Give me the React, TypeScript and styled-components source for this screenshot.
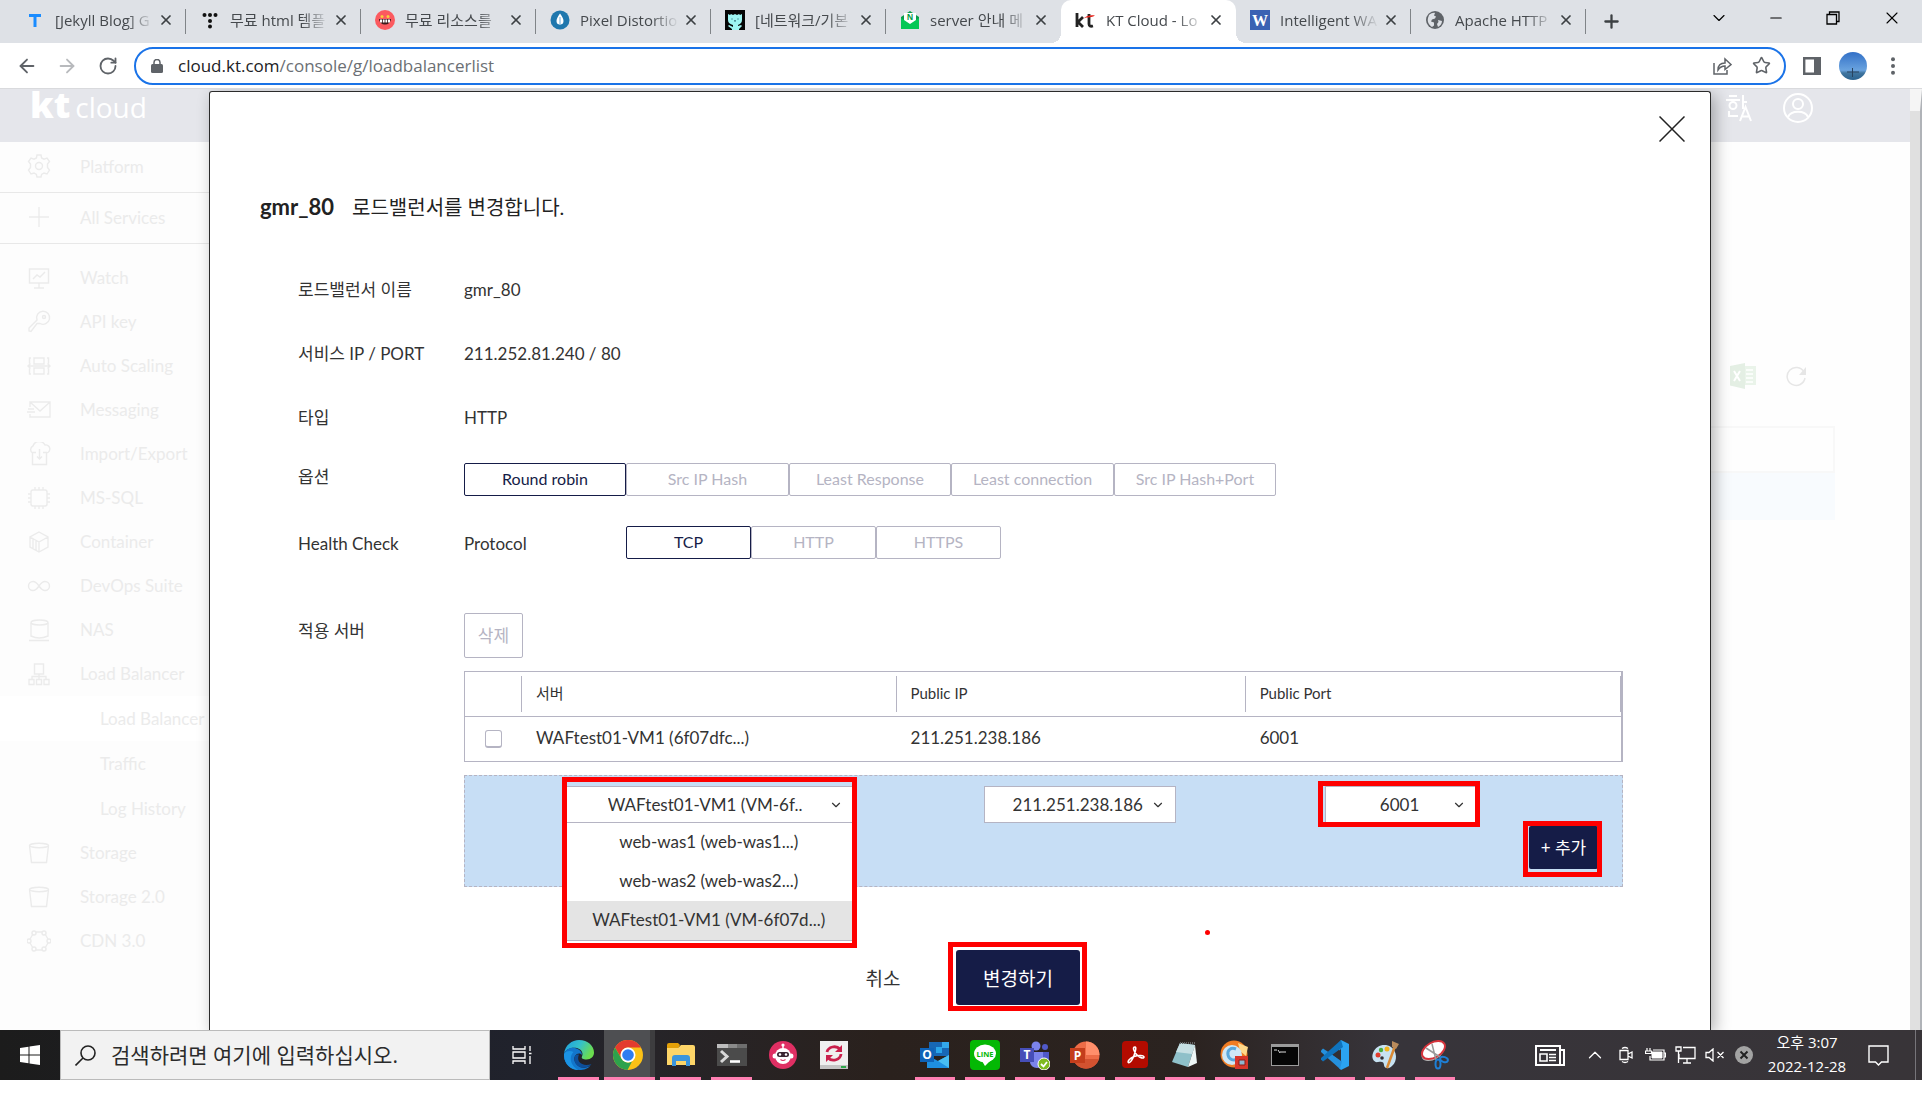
import React from "react";
import styled, { createGlobalStyle, css } from "styled-components";
import {
  ArrowLeft,
  ArrowRight,
  ChevronDown,
  ChevronUp,
  Minus,
  Plus,
  RotateCw,
  Star,
  X,
} from "lucide-react";

const uiFont = `"Open Sans", "Noto Sans CJK KR", sans-serif`;
const pageFont = `Lato, "Noto Sans CJK KR", sans-serif`;
const line = "#b5b4c3";
const navy = "#151c47";
const ink = "#333333";
const faint = "#ebebeb";
const pink = "#ff7fb2";

const GlobalStyle = createGlobalStyle`
  * { box-sizing: border-box; }
  body { margin: 0; background: #fff; overflow: hidden; }
  button, select, input { font: inherit; color: inherit; margin: 0; }
  button { background: none; border: 0; padding: 0; cursor: pointer; }
  ul { list-style: none; margin: 0; padding: 0; }
  svg { display: block; flex: none; }
`;

const Screen = styled.div`
  height: 100vh;
  padding-bottom: 30px;
  display: flex;
  flex-direction: column;
  font-family: ${uiFont};
  color: ${ink};
`;

/* ---------- browser chrome ---------- */

const TabStrip = styled.div`
  flex: none;
  height: 43px;
  background: #dee1e6;
  display: flex;
  padding-left: 11px;
`;

const Tabs = styled.div`
  display: flex;
`;

const Tab = styled.div<{ $active?: boolean; $line?: boolean }>`
  position: relative;
  width: 175px;
  padding: 0 12px 3px 14px;
  display: flex;
  align-items: center;
  color: #45494d;
  font-size: 15px;
  line-height: 24px;
  ${(p) =>
    p.$active &&
    css`
      background: #fff;
      border-radius: 10px 10px 0 0;
      &::before,
      &::after {
        content: "";
        position: absolute;
        bottom: 0;
        width: 10px;
        height: 10px;
      }
      &::before {
        left: -10px;
        background: radial-gradient(circle at 0 0, transparent 10px, #fff 10px);
      }
      &::after {
        right: -10px;
        background: radial-gradient(circle at 100% 0, transparent 10px, #fff 10px);
      }
    `}
  ${(p) =>
    p.$line &&
    css`
      &::after {
        content: "";
        position: absolute;
        right: 0;
        top: 9px;
        width: 1px;
        height: 25px;
        background: #808488;
      }
    `}
`;

const TabTitle = styled.span`
  flex: 1;
  min-width: 0;
  margin-left: 10px;
  margin-right: 4px;
  white-space: nowrap;
  mask-image: linear-gradient(90deg, #000 72%, transparent);
`;

const IconButton = styled.button<{ $w?: number }>`
  width: ${(p) => (p.$w ? `${p.$w}px` : "auto")};
  display: flex;
  align-items: center;
  justify-content: center;
  color: inherit;
`;

const NewTab = styled(IconButton)`
  width: 50px;
  color: #3c4043;
`;

const WindowControls = styled.div`
  margin-left: auto;
  display: flex;
  height: 36px;
  color: #000;
`;

const Toolbar = styled.div`
  flex: none;
  height: 46px;
  display: flex;
  align-items: center;
  padding: 0 11px 0 7px;
  background: #fff;
  border-bottom: 1px solid #d9dadd;
  color: #5f6368;
`;

const AddressBar = styled.div`
  flex: 1;
  height: 38px;
  margin: 0 6px;
  border: 2px solid #1a73e8;
  border-radius: 19px;
  display: flex;
  align-items: center;
  padding: 0 3px 0 15px;
`;

const Address = styled.a`
  flex: 1;
  margin-left: 15px;
  font-size: 17px;
  line-height: 24px;
  color: #6b6f74;
  text-decoration: none;
  b {
    font-weight: 400;
    color: #202124;
  }
`;

/* ---------- console page behind the dialog ---------- */

const Page = styled.div`
  position: relative;
  flex: 1;
  min-height: 0;
  display: flex;
  overflow: hidden;
  font-family: ${pageFont};
  background: #fefefe;
`;

const Console = styled.div`
  flex: 1;
  display: flex;
  flex-direction: column;
`;

const Masthead = styled.header`
  flex: none;
  height: 53px;
  background: #e5e6eb;
  color: #fff;
  display: flex;
  align-items: flex-start;
  justify-content: space-between;
  padding: 0 97px 0 30px;
`;

const Brand = styled.div`
  display: flex;
  align-items: baseline;
  gap: 5px;
  font-family: "Open Sans", sans-serif;
  font-size: 28px;
  line-height: 32px;
  b {
    font-size: 36px;
    font-weight: 800;
  }
`;

const MastIcons = styled.div`
  display: flex;
  align-items: center;
  gap: 30px;
  padding-top: 4px;
`;

const Body = styled.div`
  flex: 1;
  display: flex;
  min-height: 0;
`;

const Sidebar = styled.nav`
  width: 209px;
  flex: none;
  color: ${faint};
  font-size: 17px;
  background: #fdfdfd;
`;

const TopEntry = styled.a`
  height: 51px;
  display: flex;
  align-items: center;
  gap: 29px;
  padding: 0 0 2px 27px;
  border-bottom: 1px solid #e8e8e8;
`;

const Entries = styled.ul`
  padding-top: 12px;
`;

const Entry = styled.li`
  height: 44px;
  line-height: 24px;
  display: flex;
  align-items: center;
  gap: 29px;
  padding-left: 27px;
  white-space: nowrap;
`;

const SubEntry = styled.li`
  height: 45px;
  line-height: 24px;
  display: flex;
  align-items: center;
  padding-left: 100px;
  white-space: nowrap;
  &:first-child {
    background: #fff;
  }
`;

const Workspace = styled.main`
  flex: 1;
  display: flex;
  flex-direction: column;
  padding: 221px 75px 0 0;
`;

const Tools = styled.div`
  display: flex;
  justify-content: flex-end;
  align-items: center;
  gap: 29px;
  padding-right: 28px;
  color: #ececec;
`;

const BackTable = styled.div`
  margin-top: 37px;
  border: 2px solid #f8f8f8;
  height: 47px;
`;

const BackRow = styled.div`
  height: 47px;
  background: #f8fbfe;
`;

const Scrollbar = styled.div`
  width: 12px;
  background: #e0e0e0;
  border-top: 22px solid #f5f5f5;
  border-right: 2px solid #b0b3b8;
`;

/* ---------- dialog ---------- */

const Dialog = styled.section`
  position: absolute;
  top: 2px;
  bottom: 0;
  left: 209px;
  right: 211px;
  border: 1px solid #2b2b2b;
  border-bottom: 0;
  border-radius: 3px 3px 0 0;
  background: #fff;
  box-shadow: 4px 4px 16px rgba(0, 0, 0, 0.3);
  display: flex;
  flex-direction: column;
`;

const DialogTop = styled.div`
  display: flex;
  justify-content: flex-end;
  padding: 24px 25px 0 0;
`;

const DialogTitle = styled.h1`
  margin: 50px 0 56px 50px;
  display: flex;
  gap: 18px;
  font-size: 20px;
  line-height: 30px;
  font-weight: 400;
  color: #222;
  b {
    font-size: 22px;
  }
`;

const Form = styled.div`
  padding: 0 87px 0 88px;
  font-size: 17px;
  line-height: 24px;
`;

const FormRow = styled.div<{ $gap: number }>`
  display: flex;
  align-items: flex-start;
  margin-bottom: ${(p) => p.$gap}px;
`;

const Label = styled.div<{ $drop?: number }>`
  width: 166px;
  flex: none;
  padding-top: ${(p) => p.$drop ?? 0}px;
`;

const Protocol = styled(Label)`
  width: 162px;
`;

const Field = styled.div`
  flex: 1;
`;

const Segments = styled.div`
  display: flex;
`;

const Segment = styled.button<{ $w: number; $on?: boolean }>`
  width: ${(p) => p.$w}px;
  height: 33px;
  padding-bottom: 2px;
  border: 1px solid ${(p) => (p.$on ? navy : line)};
  border-radius: 2px;
  font-size: 16px;
  line-height: 20px;
  color: ${(p) => (p.$on ? navy : line)};
  background: #fff;
`;

const DeleteButton = styled.button`
  display: block;
  width: 59px;
  height: 45px;
  border: 1px solid ${line};
  border-radius: 2px;
  color: ${line};
`;

const ServerTable = styled.table`
  width: 100%;
  margin: 13px 0;
  border: 1px solid ${line};
  border-right-width: 2px;
  border-spacing: 0;
  table-layout: fixed;
  th,
  td {
    height: 44px;
    padding: 0 0 2px 14px;
    text-align: left;
    font-weight: 400;
  }
  th {
    font-size: 15px;
    line-height: 34px;
    padding: 4px 0;
    height: 45px;
    border-bottom: 1px solid ${line};
  }
  td:first-child {
    padding: 0 0 0 20px;
  }
`;

const PickCol = styled.col`
  width: 57px;
`;

const ServerCol = styled.col`
  width: 32.4%;
`;

const IpCol = styled.col`
  width: 30.2%;
`;

const HeadCell = styled.div`
  height: 36px;
  border-right: 1px solid ${line};
  padding-left: 14px;
`;

const Check = styled.input`
  appearance: none;
  display: block;
  width: 17px;
  height: 18px;
  border: 1px solid ${line};
  border-bottom-width: 2px;
  border-radius: 3px;
  background: #fff;
`;

const AddPanel = styled.div`
  border: 1px dashed ${line};
  background: #c7def5;
  padding: 10px 0 17px;
`;

const Picks = styled.div`
  display: grid;
  grid-template-columns: 487fr 254fr 388fr 27fr;
  justify-items: center;
`;

const Pick = styled.div<{ $w: number }>`
  position: relative;
  width: ${(p) => p.$w}px;
`;

const Select = styled.select<{ $pad: string }>`
  appearance: none;
  display: block;
  width: 100%;
  height: 37px;
  border: 1px solid ${line};
  border-radius: 0;
  background: #fff;
  padding: ${(p) => p.$pad};
  text-align: left;
`;

const Arrow = styled.span`
  position: absolute;
  right: 11px;
  top: 12px;
  pointer-events: none;
`;

const Options = styled.ul`
  position: absolute;
  z-index: 1;
  top: 37px;
  left: 0;
  right: 0;
  background: #fff;
  border: 1px solid ${line};
  border-top: 0;
`;

const Option = styled.li<{ $on?: boolean }>`
  height: 39px;
  line-height: 38px;
  text-align: center;
  background: ${(p) => (p.$on ? "#e4e4e4" : "#fff")};
`;

const Mark = styled.span<{ $inset: string }>`
  position: absolute;
  z-index: 2;
  inset: ${(p) => p.$inset};
  border: 5px solid #fe0000;
  pointer-events: none;
`;

const Dot = styled.span`
  position: absolute;
  left: 66.3%;
  bottom: 95px;
  width: 5px;
  height: 5px;
  border-radius: 50%;
  background: #fe0000;
`;

const AddLine = styled.div`
  display: flex;
  justify-content: flex-end;
  padding: 3px 24px 0 0;
`;

const Marked = styled.div`
  position: relative;
`;

const AddButton = styled.button`
  display: block;
  width: 69px;
  height: 43px;
  border-radius: 2px;
  background: ${navy};
  color: #fff;
  font-size: 17px;
`;

const Footer = styled.div`
  display: flex;
  justify-content: center;
  gap: 28px;
  padding: 63px 2px 0 0;
  font-size: 19px;
`;

const CancelButton = styled.button`
  width: 90px;
  height: 55px;
`;

const ApplyButton = styled.button`
  display: block;
  width: 124px;
  height: 55px;
  border-radius: 3px;
  background: ${navy};
  color: #fff;
`;

/* ---------- taskbar ---------- */

const Taskbar = styled.footer`
  flex: none;
  height: 50px;
  display: flex;
  color: #fff;
  background: linear-gradient(90deg, #1c1c1c 0, #20222c 27%, #262428 34%, #2a211d 46%, #2b2320 62%, #37343a 72%, #383438 100%);
`;

const StartButton = styled(IconButton)`
  width: 60px;
`;

const SearchBox = styled.label`
  width: 430px;
  background: #f2f2f2;
  border: 1px solid #bbb;
  display: flex;
  align-items: center;
  padding-left: 14px;
  color: #1a1a1a;
  input {
    flex: 1;
    min-width: 0;
    margin-left: 15px;
    border: 0;
    padding: 0;
    background: none;
    font-size: 21px;
    line-height: 30px;
    color: #222;
  }
  input::placeholder {
    color: #2b2b2b;
    opacity: 1;
  }
`;

const TaskGroup = styled.div<{ $gap?: number }>`
  display: flex;
  margin-left: ${(p) => p.$gap ?? 0}px;
`;

const TaskButton = styled.button<{ $w: number; $open?: boolean; $active?: boolean }>`
  position: relative;
  width: ${(p) => p.$w}px;
  height: 50px;
  display: flex;
  align-items: center;
  justify-content: center;
  background: ${(p) => (p.$active ? "linear-gradient(90deg, #4e4f52 46px, #3d3d3f 46px)" : "transparent")};
  padding-right: ${(p) => (p.$active ? 4 : 0)}px;
  &::after {
    content: "";
    display: ${(p) => (p.$open ? "block" : "none")};
    position: absolute;
    bottom: 0;
    left: ${(p) => (p.$active ? 0 : 5)}px;
    right: ${(p) => (p.$active ? 0 : 5)}px;
    height: 3px;
    background: ${pink};
  }
`;

const Tray = styled.div`
  margin-left: auto;
  display: flex;
  align-items: center;
`;

const Clock = styled.div`
  width: 88px;
  margin: 0 2px 2px 4px;
  text-align: center;
  font-size: 15px;
  line-height: 24px;
`;

const TrayEnd = styled.div`
  width: 7px;
  height: 50px;
  margin-left: 11px;
  border-left: 1px solid #77757a;
`;

/* ---------- drawings ---------- */

type Kids = { children: React.ReactNode };
const Svg = ({ w = 20, h = w, box = "0 0 20 20", children }: Kids & { w?: number; h?: number; box?: string }) => (
  <svg width={w} height={h} viewBox={box} fill="none" aria-hidden="true">
    {children}
  </svg>
);

const favicons = {
  t: (
    <Svg>
      <path d="M4 4h12v3h-4.500v10h-3V7H4z" fill="#1a8cff" />
    </Svg>
  ),
  dots: (
    <Svg>
      <g fill="#111">
        <circle cx="4.500" cy="5" r="2" />
        <circle cx="10" cy="5" r="2" />
        <circle cx="15.500" cy="5" r="2" />
        <circle cx="10" cy="11" r="2" />
        <circle cx="10" cy="16.500" r="2" />
      </g>
    </Svg>
  ),
  grin: (
    <Svg>
      <circle cx="10" cy="10" r="10" fill="#fb5a5f" />
      <path d="M4 9h12a6 5.500 0 0 1-12 0z" fill="#3b1a1a" />
      <path d="M5 9.500h10v3H5z" fill="#fff" />
      <path d="M7.500 9v4M10 9v4M12.500 9v4" stroke="#3b1a1a" strokeWidth=".8" />
      <circle cx="7" cy="6.500" r="1.500" fill="#f8d23c" />
      <circle cx="13" cy="6.500" r="1.500" fill="#f8d23c" />
    </Svg>
  ),
  drop: (
    <Svg>
      <circle cx="10" cy="10" r="9.500" fill="#1f77ad" />
      <path d="M10 3.500c2 3 3.500 5 3.500 7.500a3.500 3.500 0 0 1-7 0C6.500 8.500 8 6.500 10 3.500z" fill="#fff" />
      <path d="M10 7v7.500" stroke="#9cc9e6" strokeWidth="1.500" />
    </Svg>
  ),
  cat: (
    <Svg>
      <path d="M0 0h20v20H0z" fill="#050505" />
      <path d="M3 4l2 1 1-1 2 1 2-1 2 1 2-1 1 1 2-1v6c0 3-2 4-4 5v1l3-1 1 1-3 3v1H7v-1l-4-3 1-1 4 2v-2c-3-1-5-2-5-5z" fill="#9df5f2" />
      <path d="M6.500 9h1M12.500 9h1M9 10.500l1 .8 1-.8" stroke="#145" strokeWidth=".9" />
    </Svg>
  ),
  mail: (
    <Svg>
      <path d="M1 7l9-6 9 6v11H1z" fill="#0a9d4a" />
      <path d="M4 3h12v9l-6 3-6-3z" fill="#fff" />
      <path d="M1 8l9 6 9-6v11H1z" fill="#05c755" />
      <text x="10" y="10" fontSize="8" fontWeight="700" textAnchor="middle" fill="#0a9d4a" fontFamily="Open Sans">
        N
      </text>
    </Svg>
  ),
  kt: (
    <Svg w={21} h={20} box="0 0 21 20">
      <path d="M2 3v14M8 7l-5 5 5 5M14 4v10q0 3 4 2" stroke="#222" strokeWidth="2.800" />
      <path d="M8 9c3-3 7 0 12-3.500-3-.5-8-1-12 3.500z" fill="#e5231b" />
    </Svg>
  ),
  w: (
    <Svg>
      <path d="M0 0h20v20H0z" fill="#3a62b3" />
      <text x="10" y="15.500" fontSize="16" fontWeight="700" textAnchor="middle" fill="#fff" fontFamily="Liberation Serif">
        W
      </text>
    </Svg>
  ),
  globe: (
    <Svg>
      <circle cx="10" cy="10" r="9" fill="#5f6368" />
      <path d="M4 5c2-2 5-2.500 6-2l-1 2.500 2 1-1 2-3 1-1 2 3 1v3l-2 1.500C4 15 2 12 3 8zM13 10l4 1c0 3-2 5-4 6l-1-3 1.500-2z" fill="#dee1e6" />
    </Svg>
  ),
};

const tabs: { icon: keyof typeof favicons; title: string }[] = [
  { icon: "t", title: "[Jekyll Blog] G" },
  { icon: "dots", title: "무료 html 템플" },
  { icon: "grin", title: "무료 리소스를" },
  { icon: "drop", title: "Pixel Distortio" },
  { icon: "cat", title: "[네트워크/기본" },
  { icon: "mail", title: "server 안내 메" },
  { icon: "kt", title: "KT Cloud - Lo" },
  { icon: "w", title: "Intelligent WA" },
  { icon: "globe", title: "Apache HTTP" },
];

const LineIcon = ({ children }: Kids) => (
  <svg width="24" height="24" viewBox="0 0 24 24" fill="none" stroke="currentColor" strokeWidth="1.400" aria-hidden="true">
    {children}
  </svg>
);

const bucket = (
  <LineIcon>
    <path d="M2.500 4.500l2 17h15l2-17" />
    <ellipse cx="12" cy="4.500" rx="9.500" ry="2.200" />
  </LineIcon>
);

const services: { name: string; icon: React.ReactNode }[] = [
  { name: "Watch", icon: <LineIcon><path d="M2.500 3h19v14h-19zM12 17v5M7 22h10M6 13l4-4 3 2 5-5" /></LineIcon> },
  {
    name: "API key",
    icon: <LineIcon><path d="M10 13.500L4 21.500l-2-.5v-3l8-8a6.500 6.500 0 1 1 3 3.500z" /><circle cx="17" cy="7" r="1.500" /></LineIcon>,
  },
  {
    name: "Auto Scaling",
    icon: <LineIcon><path d="M7 4h10v6H7zM7 14h10v6H7zM4 4H2.500v5.500M20 4h1.500v5.500M4 20H2.500v-5.500M20 20h1.500v-5.500M1 12h22M3.500 9.500L1 12l2.500 2.500M20.500 9.500L23 12l-2.500 2.500" /></LineIcon>,
  },
  { name: "Messaging", icon: <LineIcon><path d="M3 9V4h20v15H3v-3M3 4l10 9L23 4M1 11h6M0 14h8" /></LineIcon> },
  {
    name: "Import/Export",
    icon: <LineIcon><path d="M5.500 11a4 4 0 0 1 .5-7 6.500 6.500 0 0 1 12-1 4 4 0 0 1 1.500 8M9 10.500H5.500v12h14v-12H16M12.500 17V7M10 14.500l2.500 2.500 2.500-2.500" /></LineIcon>,
  },
  {
    name: "MS-SQL",
    icon: <LineIcon><rect x="4" y="4" width="16" height="16" rx="2" /><path d="M8 4V1M12 4V1M16 4V1M8 23v-3M12 23v-3M16 23v-3M1 8h3M1 12h3M1 16h3M20 8h3M20 12h3M20 16h3" /></LineIcon>,
  },
  { name: "Container", icon: <LineIcon><path d="M12 2l9 5v10l-9 5-9-5V7zM3 7l9 5 9-5M12 12v10M6 9v9M9 11v9" /></LineIcon> },
  { name: "DevOps Suite", icon: <LineIcon><path d="M12 12c-2-3-3.500-4.500-6-4.500a4.500 4.500 0 0 0 0 9c2.500 0 4-1.500 6-4.500s3.500-4.500 6-4.500a4.500 4.500 0 0 1 0 9c-2.500 0-4-1.500-6-4.500z" /></LineIcon> },
  { name: "NAS", icon: <LineIcon><path d="M4 5v13q8 4 17 0V5M2 22.500h20" /><ellipse cx="12.500" cy="4.500" rx="8.500" ry="2.500" /></LineIcon> },
  { name: "Load Balancer", icon: <LineIcon><path d="M7.500 2h9v10h-9zM12 12v5M5 17v-2.500h14V17M2 17.500h5v5H2zM9.500 17.500h5v5h-5zM17 17.500h5v5h-5z" /></LineIcon> },
];

const lastServices: { name: string; icon: React.ReactNode }[] = [
  { name: "Storage", icon: bucket },
  { name: "Storage 2.0", icon: bucket },
  {
    name: "CDN 3.0",
    icon: (
      <LineIcon>
        <path d="M9 3h6M18 5l3 5M21 14l-3 5M15 21H9M6 19l-3-5M3 10l3-5" />
        <circle cx="7" cy="4" r="2" /><circle cx="17" cy="4" r="2" /><circle cx="22" cy="12" r="2" />
        <circle cx="17" cy="20" r="2" /><circle cx="7" cy="20" r="2" /><circle cx="2" cy="12" r="2" />
      </LineIcon>
    ),
  },
];

const T = ({ x, y, s, children, f = "#fff" }: { x: number; y: number; s: number; f?: string; children: string }) => (
  <text x={x} y={y} fontSize={s} fill={f} fontWeight="700" textAnchor="middle" fontFamily="Open Sans">
    {children}
  </text>
);

const Big = ({ children }: Kids) => (
  <Svg w={30} box="0 0 30 30">
    {children}
  </Svg>
);

const mainTasks = [
  {
    name: "Edge", open: true,
    art: (
      <Big>
        <defs>
          <linearGradient id="edgeTop" x1="0" x2="1" y1="0" y2=".4">
            <stop offset="0" stopColor="#1b9de2" /><stop offset=".55" stopColor="#35c1c9" /><stop offset="1" stopColor="#6bdc4f" />
          </linearGradient>
        </defs>
        <path d="M0 14C1 5 8 0 15 0c9 0 15 6 15 12.500 0 4-3 7-7.500 7-3.500 0-5.500-1-4.500-3 1.500-3 0-7-5-8.500C7 7 2 9 0 14z" fill="url(#edgeTop)" />
        <path d="M0 14c1.500-4.500 6-7 11-6 4 .8 7 3.500 7 7-1-2-5-2.500-7 1-2 4 1 9 5 11 4 1.500 8 .5 11-2-3 4-7 5-11.500 5C6 30-.5 23 0 14z" fill="#1276cc" />
        <path d="M9.500 12c-5 5-3 14 5 18C6 30-.5 23 0 14c3-4 7-3 9.500-2z" fill="#1b93e4" />
        <path d="M11 16c-2 5 1 10 6 11.500 4 1 8-.5 10.500-3.500-5 2-10 1-12.500-2.500-1.300-2-1-5 0-7-2-.3-3.400.2-4 1.500z" fill="#0d4f9c" />
      </Big>
    ),
  },
  {
    name: "Chrome", open: true, active: true,
    art: (
      <Big>
        <circle cx="15" cy="15" r="15" fill="#fbc116" />
        <path d="M2 7.500A15 15 0 0 1 28 7.500H15a7.500 7.500 0 0 0-6.500 11z" fill="#e33b2e" />
        <path d="M2 7.500l6.500 11.250A7.500 7.500 0 0 0 19 21.500L14.500 30A15 15 0 0 1 2 7.500z" fill="#2da24c" />
        <circle cx="15" cy="15" r="7.500" fill="#fff" />
        <circle cx="15" cy="15" r="5.800" fill="#2f7df0" />
      </Big>
    ),
  },
  {
    name: "탐색기", open: true,
    art: (
      <Big>
        <path d="M1 5q0-2 2-2h9l2 2-2 4H1z" fill="#e3a008" />
        <path d="M1 8h11l3-3h12q2 0 2 2v18H1z" fill="#fdd568" />
        <path d="M6 26v-8q0-3 3-3h12q3 0 3 3v8h-4v-5h-10v5z" fill="#3b95dc" />
      </Big>
    ),
  },
  {
    name: "Terminal", open: true,
    art: (
      <Big>
        <path d="M0 4h30v22H0z" fill="#4b4b4b" />
        <path d="M0 4h11v4H0z" fill="#bdbdbd" /><path d="M11 4h9v4h-9z" fill="#8a8a8a" /><path d="M20 4h10v4H20z" fill="#6e6e6e" />
        <path d="M4 11l6 5.500-6 5.500" stroke="#d8d8d8" strokeWidth="3" /><path d="M13 21.500h10" stroke="#fff" strokeWidth="2.600" />
      </Big>
    ),
  },
  {
    name: "Bot",
    art: (
      <Big>
        <circle cx="15" cy="15" r="14" fill="#df2f63" />
        <path d="M15 5v6" stroke="#fff" strokeWidth="1.500" />
        <circle cx="15" cy="5" r="1.600" fill="#fff" />
        <circle cx="15" cy="16" r="8" fill="#fff" /><ellipse cx="6.500" cy="16" rx="2" ry="2.500" fill="#fff" /><ellipse cx="23.500" cy="16" rx="2" ry="2.500" fill="#fff" />
        <rect x="9" y="12" width="12" height="5" rx="2.500" fill="#3a2632" />
        <circle cx="12" cy="14.500" r="1.200" fill="#fff" /><circle cx="18" cy="14.500" r="1.200" fill="#fff" />
        <path d="M12.500 19.500q2.500 2 5 0" stroke="#df2f63" strokeWidth="1.200" />
      </Big>
    ),
  },
  {
    name: "Sync",
    art: (
      <Big>
        <path d="M1 1h28v28H1z" fill="#efefef" />
        <path d="M1 25h28v4H1z" fill="#c4c4c4" />
        <path d="M22 26h5v2h-5z" fill="#2ea84a" />
        <path d="M8 12a7.500 6.500 0 0 1 13-3M22 14a7.500 6.500 0 0 1-13 4" stroke="#c9204c" strokeWidth="2.800" />
        <path d="M23 5v7h-7zM7 22v-7h7z" fill="#c9204c" />
      </Big>
    ),
  },
];

const appTasks = [
  {
    name: "Outlook",
    art: (
      <Big>
        <path d="M9 2h20v14H9z" fill="#1767b5" /><path d="M16 7h6v6h-6z" fill="#2aa5ea" /><path d="M22 2h7v6h-7z" fill="#33a8ec" />
        <path d="M7 15l11 6 11-6v13H7z" fill="#1e8fe0" /><path d="M29 15L18 21l11 7z" fill="#48bdf2" />
        <path d="M0 8h14v14H0z" fill="#0e63b8" /><T x={7} y={19} s={12}>O</T>
      </Big>
    ),
  },
  {
    name: "LINE",
    art: (
      <Big>
        <rect width="30" height="30" rx="4" fill="#04b804" />
        <ellipse cx="15" cy="13.500" rx="11" ry="9" fill="#fff" /><path d="M12 21l3 5 6-6z" fill="#fff" />
        <T x={15} y={16.500} s={7.500} f="#04b804">LINE</T>
      </Big>
    ),
  },
  {
    name: "Teams",
    art: (
      <Big>
        <circle cx="16" cy="6" r="4.500" fill="#7b83eb" /><circle cx="25" cy="7" r="3" fill="#5059c9" />
        <path d="M10 12h14v10a7 6 0 0 1-14 0z" fill="#7b83eb" /><path d="M23 12h6v9h-6z" fill="#5059c9" />
        <path d="M0 8h14v14H0z" fill="#464eb8" /><T x={7} y={19} s={12}>T</T>
        <circle cx="24" cy="24" r="6" fill="#7fba20" stroke="#fff" /><path d="M21 24l2.500 2.500L27 22" stroke="#fff" strokeWidth="1.800" />
      </Big>
    ),
  },
  {
    name: "PowerPoint",
    art: (
      <Big>
        <circle cx="16" cy="15" r="13.500" fill="#ed6c47" /><path d="M16 1.500A13.500 13.500 0 0 1 29.500 15H16z" fill="#ff8f6b" />
        <path d="M3 19a13.500 13.500 0 0 0 26 0z" fill="#d35230" /><path d="M0 8h15v15H0z" fill="#c43e1c" /><T x={7.500} y={20} s={12}>P</T>
      </Big>
    ),
  },
  {
    name: "Acrobat",
    art: (
      <Big>
        <rect x="2" y="1" width="26" height="27" rx="4" fill="#b30b00" />
        <path d="M15 7c-3 0-1 5 2 8 3 3 7 4 7 2s-6-2-10-.500-7 5-5.500 6 4-3 5.500-7 2.500-8.500 1-8.500z" stroke="#fff" strokeWidth="1.600" />
      </Big>
    ),
  },
  {
    name: "Notepad",
    art: (
      <Big>
        <path d="M10 3l15 2-7 22-16-5z" fill="#8fc0c9" /><path d="M10 3l15 2-3 9-16-2z" fill="#c6dfe3" />
        <path d="M25 5l2 18-9 4z" fill="#eef6f6" /><path d="M10 3h16" stroke="#666" strokeDasharray="1 1" strokeWidth="2" />
      </Big>
    ),
  },
  {
    name: "Capture",
    art: (
      <Big>
        <circle cx="14" cy="14" r="13.500" fill="#f07c23" /><path d="M18 3l10 4-2 9-6-5z" fill="#ffd98a" />
        <circle cx="12" cy="15" r="10" fill="#cfe7f6" /><path d="M16 9c-5-2-9 1-8 6s6 6 9 4" stroke="#5aa7dc" strokeWidth="3" />
        <path d="M15 16h13v13H15z" fill="#d8352a" /><path d="M19 20h6v5h-6z" fill="#8fb6cf" stroke="#8d1d16" />
      </Big>
    ),
  },
  {
    name: "Command Prompt",
    art: (
      <Big>
        <path d="M1 4h28v22H1z" fill="#9b9b9b" /><path d="M2 7h26v18H2z" fill="#060606" /><path d="M4 10h3M8 10l2 3M10 12h6" stroke="#ddd" />
      </Big>
    ),
  },
  {
    name: "VS Code",
    art: (
      <Big>
        <path d="M21 0l8 4v22l-8 4-2-2V3z" fill="#2ba3f1" />
        <path d="M3 8.500L1 10.500v1.500l19 17 2-8z" fill="#2590dd" />
        <path d="M21 0L1 18v1.500l2 2L23 7z" fill="#0f73bd" />
        <path d="M21 9v12l-8-6z" fill="#322f33" />
      </Big>
    ),
  },
  {
    name: "Paint",
    art: (
      <Big>
        <path d="M3 13C6 5 15 3 21 7s7 14 1 19c-4 4-8 2-8-1s-2-4-6-3-7-4-5-9z" fill="#c7e2f2" />
        <circle cx="8" cy="15" r="2.500" fill="#e03c2c" /><circle cx="11" cy="10" r="2.200" fill="#49ad3f" /><circle cx="17" cy="9" r="2.500" fill="#f4b31c" /><circle cx="12" cy="18" r="1.800" fill="#322f33" />
        <path d="M25 6L17 28" stroke="#d98a35" strokeWidth="2.500" /><path d="M22 1l7 3-3 5-4-2z" fill="#b98b5c" />
      </Big>
    ),
  },
  {
    name: "Snipping Tool",
    art: (
      <Big>
        <ellipse cx="13" cy="12" rx="12.500" ry="7.500" transform="rotate(-30 13 12)" fill="#b5b5b5" />
        <ellipse cx="13.500" cy="10" rx="12.500" ry="7.500" transform="rotate(-30 13.500 10)" fill="#fff" stroke="#d6343c" strokeWidth="2" />
        <path d="M6 8l14 9M12 4l4 16" stroke="#999" strokeWidth="1.500" />
        <ellipse cx="18" cy="24" rx="2.500" ry="4.500" stroke="#1e7fd6" strokeWidth="2" /><ellipse cx="24" cy="19.500" rx="4" ry="2.500" transform="rotate(20 24 19.500)" stroke="#1e7fd6" strokeWidth="2" />
      </Big>
    ),
  },
];

const balancing = ["Round robin", "Src IP Hash", "Least Response", "Least connection", "Src IP Hash+Port"];
const protocols = ["TCP", "HTTP", "HTTPS"];

/* ---------- sections ---------- */

const BrowserBar = () => (
  <>
    <TabStrip>
      <Tabs>
        {tabs.map((tab, i) => (
          <Tab key={tab.title} $active={i === 6} $line={i !== 6 && i !== 5}>
            {favicons[tab.icon]}
            <TabTitle>{tab.title}</TabTitle>
            <IconButton aria-label="탭 닫기">
              <X size={16} strokeWidth={2.6} color="#3c4043" />
            </IconButton>
          </Tab>
        ))}
      </Tabs>
      <NewTab aria-label="새 탭">
        <Plus size={21} strokeWidth={2.6} />
      </NewTab>
      <WindowControls>
        <IconButton $w={57} aria-label="탭 검색"><ChevronDown size={20} strokeWidth={1.4} /></IconButton>
        <IconButton $w={57} aria-label="최소화"><Minus size={18} strokeWidth={1.4} /></IconButton>
        <IconButton $w={57} aria-label="복원">
          <Svg w={14} box="0 0 14 14"><path d="M1 3.500h9.500V13H1zM3.500 3.500V1H13v9.500h-2.500" stroke="#000" strokeWidth="1.300" /></Svg>
        </IconButton>
        <IconButton $w={61} aria-label="닫기"><X size={20} strokeWidth={1.3} /></IconButton>
      </WindowControls>
    </TabStrip>
    <Toolbar>
      <IconButton $w={40} aria-label="뒤로"><ArrowLeft size={22} /></IconButton>
      <IconButton $w={40} aria-label="앞으로"><ArrowRight size={22} color="#b8babd" /></IconButton>
      <IconButton $w={41} aria-label="새로고침"><RotateCw size={20} strokeWidth={2.2} /></IconButton>
      <AddressBar>
        <Svg w={12} h={14} box="0 0 12 14">
          <rect x="0" y="5" width="12" height="9" rx="1.500" fill="#5f6368" />
          <path d="M3 6V3.500a3 3 0 0 1 6 0V6" stroke="#5f6368" strokeWidth="1.500" />
        </Svg>
        <Address href="#"><b>cloud.kt.com</b>/console/g/loadbalancerlist</Address>
        <IconButton $w={40} aria-label="공유">
          <Svg w={20}><path d="M2 7v11h13v-4M6 14c0-5 3-7 7-7V3l6 5.500-6 5V10c-3 0-5 1-7 4z" stroke="#5f6368" strokeWidth="1.500" /></Svg>
        </IconButton>
        <IconButton $w={39} aria-label="북마크"><Star size={19} /></IconButton>
      </AddressBar>
      <IconButton $w={40} aria-label="사이드 패널">
        <Svg w={18} box="0 0 18 18"><path d="M1.200 1.200h15.600v15.600H1.200z" stroke="#5f6368" strokeWidth="2.400" /><path d="M11 1h6v16h-6z" fill="#5f6368" /></Svg>
      </IconButton>
      <IconButton $w={42} aria-label="프로필">
        <Svg w={28} box="0 0 28 28">
          <defs><linearGradient id="sky" x2="0" y2="1"><stop stopColor="#3270c7" /><stop offset=".65" stopColor="#6aa3df" /><stop offset=".75" stopColor="#40759f" /><stop offset="1" stopColor="#2b628f" /></linearGradient></defs>
          <circle cx="14" cy="14" r="14" fill="url(#sky)" /><path d="M13.500 16v9M8 20h12" stroke="#28435e" />
        </Svg>
      </IconButton>
      <IconButton $w={37} aria-label="메뉴">
        <Svg w={4} h={18} box="0 0 4 18"><g fill="#5f6368"><circle cx="2" cy="2.200" r="2" /><circle cx="2" cy="9" r="2" /><circle cx="2" cy="15.800" r="2" /></g></Svg>
      </IconButton>
    </Toolbar>
  </>
);

const ConsolePage = () => (
  <>
    <Console>
      <Masthead>
        <Brand><b>kt</b>cloud</Brand>
        <MastIcons>
          <Svg w={28} h={28} box="0 0 28 28">
            <path d="M4 2h8M1 6h14M18 1v14M18 8h4M4 17v5h9" stroke="#fff" strokeWidth="2" />
            <circle cx="8" cy="11.500" r="3.500" stroke="#fff" strokeWidth="2" />
            <path d="M15 27l5.500-14L26 27M17 22.500h7" stroke="#fff" strokeWidth="2" />
          </Svg>
          <Svg w={30} box="0 0 30 30">
            <circle cx="15" cy="15" r="14" stroke="#fff" strokeWidth="2" />
            <circle cx="15" cy="11" r="5" stroke="#fff" strokeWidth="2" />
            <path d="M5 24c3-7 17-7 20 0" stroke="#fff" strokeWidth="2" />
          </Svg>
        </MastIcons>
      </Masthead>
      <Body>
        <Sidebar>
          <TopEntry>
            <LineIcon><circle cx="12" cy="12" r="3.500" /><path d="M10 1h4l.6 3 2.400 1.200L20 4l2.500 3.500-2 2.500v3.500l2 2.500L20 20l-3-1-2.400 1.500L14 23h-4l-.6-2.500L7 19l-3 1-2.500-4 2-2.500V10l-2-2.500L4 4l3 1.200L9.400 4z" /></LineIcon>
            Platform
          </TopEntry>
          <TopEntry>
            <LineIcon><path d="M12 2v20M2 12h20" /></LineIcon>
            All Services
          </TopEntry>
          <Entries>
            {services.map((s) => (
              <Entry key={s.name}>{s.icon}{s.name}</Entry>
            ))}
            <li>
              <ul>
                <SubEntry>Load Balancer</SubEntry>
                <SubEntry>Traffic</SubEntry>
                <SubEntry>Log History</SubEntry>
              </ul>
            </li>
            {lastServices.map((s) => (
              <Entry key={s.name}>{s.icon}{s.name}</Entry>
            ))}
          </Entries>
        </Sidebar>
        <Workspace>
          <Tools>
            <Svg w={26} box="0 0 26 26">
              <path d="M14 3h12v19H14z" fill="#eaf4ea" /><path d="M0 3l15-3v26L0 22.500z" fill="#e4efe4" />
              <path d="M4 8l6 10M10 8L4 18" stroke="#fff" strokeWidth="2" /><path d="M16 7h7M16 11h7M16 15h7M16 19h7" stroke="#fff" strokeWidth="1.500" />
            </Svg>
            <Svg w={22} box="0 0 22 22"><path d="M19 7a9 9 0 1 0 1 6" stroke="#e6e6e6" strokeWidth="1.500" /><path d="M21 2v8h-7z" fill="#e6e6e6" /></Svg>
          </Tools>
          <BackTable />
          <BackRow />
        </Workspace>
      </Body>
    </Console>
    <Scrollbar />
  </>
);

const ChangeDialog = () => (
  <Dialog role="dialog" aria-labelledby="dialog-title">
    <DialogTop>
      <IconButton $w={26} aria-label="닫기">
        <Svg w={26} box="0 0 26 26"><path d="M.5.5l25 25M25.500.5l-25 25" stroke="#222" strokeWidth="1.500" /></Svg>
      </IconButton>
    </DialogTop>
    <DialogTitle id="dialog-title"><b>gmr_80</b><span>로드밸런서를 변경합니다.</span></DialogTitle>
    <Form>
      <FormRow $gap={40}><Label>로드밸런서 이름</Label><Field>gmr_80</Field></FormRow>
      <FormRow $gap={40}><Label>서비스 IP / PORT</Label><Field>211.252.81.240 / 80</Field></FormRow>
      <FormRow $gap={33}><Label>타입</Label><Field>HTTP</Field></FormRow>
      <FormRow $gap={30}>
        <Label $drop={2}>옵션</Label>
        <Segments role="group" aria-label="옵션">
          {balancing.map((name, i) => (
            <Segment key={name} $w={i % 2 ? 163 : 162} $on={i === 0} aria-pressed={i === 0}>{name}</Segment>
          ))}
        </Segments>
      </FormRow>
      <FormRow $gap={54}>
        <Label $drop={6}>Health Check</Label>
        <Protocol $drop={6}>Protocol</Protocol>
        <Segments role="group" aria-label="Protocol">
          {protocols.map((name, i) => (
            <Segment key={name} $w={125} $on={i === 0} aria-pressed={i === 0}>{name}</Segment>
          ))}
        </Segments>
      </FormRow>
      <FormRow $gap={0}>
        <Label $drop={6}>적용 서버</Label>
        <Field>
          <DeleteButton>삭제</DeleteButton>
          <ServerTable>
            <colgroup>
              <PickCol /><ServerCol /><IpCol /><col />
            </colgroup>
            <thead>
              <tr>
                <th><HeadCell aria-hidden="true" /></th>
                <th scope="col"><HeadCell>서버</HeadCell></th>
                <th scope="col"><HeadCell>Public IP</HeadCell></th>
                <th scope="col"><HeadCell>Public Port</HeadCell></th>
              </tr>
            </thead>
            <tbody>
              <tr>
                <td><Check type="checkbox" aria-label="WAFtest01-VM1 선택" /></td>
                <td>WAFtest01-VM1 (6f07dfc...)</td>
                <td>211.251.238.186</td>
                <td>6001</td>
              </tr>
            </tbody>
          </ServerTable>
          <AddPanel>
            <Picks>
              <Pick $w={290}>
                <Select $pad="0 30px 0 43px" aria-label="서버"><option>WAFtest01-VM1 (VM-6f..</option></Select>
                <Arrow><ChevronDown size={14} strokeWidth={2} /></Arrow>
                <Options role="listbox" aria-label="서버 목록">
                  <Option role="option" aria-selected="false">web-was1 (web-was1...)</Option>
                  <Option role="option" aria-selected="false">web-was2 (web-was2...)</Option>
                  <Option role="option" aria-selected="true" $on>WAFtest01-VM1 (VM-6f07d...)</Option>
                </Options>
                <Mark $inset="-9px -3px -125px -2px" />
              </Pick>
              <Pick $w={192}>
                <Select $pad="0 20px 0 28px" aria-label="Public IP"><option>211.251.238.186</option></Select>
                <Arrow><ChevronDown size={14} strokeWidth={2} /></Arrow>
              </Pick>
              <Pick $w={152}>
                <Select $pad="0 20px 0 54px" aria-label="Public Port"><option>6001</option></Select>
                <Arrow><ChevronDown size={14} strokeWidth={2} /></Arrow>
                <Mark $inset="-5px -3px -4px -7px" />
              </Pick>
            </Picks>
            <AddLine>
              <Marked>
                <AddButton>+ 추가</AddButton>
                <Mark $inset="-5px -4px -8px -6px" />
              </Marked>
            </AddLine>
          </AddPanel>
        </Field>
      </FormRow>
    </Form>
    <Footer>
      <CancelButton>취소</CancelButton>
      <Marked>
        <ApplyButton>변경하기</ApplyButton>
        <Mark $inset="-8px -7px -6px -8px" />
      </Marked>
    </Footer>
    <Dot />
  </Dialog>
);

const WindowsTaskbar = () => (
  <Taskbar>
    <StartButton aria-label="시작">
      <Svg w={20} box="0 0 20 20"><path d="M0 3l8.500-1.200v7.700H0zM9.500 1.600L20 0v9.500H9.500zM0 10.500h8.500v7.700L0 17zM9.500 10.500H20V20L9.500 18.400z" fill="#fff" /></Svg>
    </StartButton>
    <SearchBox>
      <Svg w={21} box="0 0 21 21"><circle cx="13" cy="8" r="7" stroke="#222" strokeWidth="1.600" /><path d="M8 13l-7.500 7.500" stroke="#222" strokeWidth="1.600" /></Svg>
      <input type="text" placeholder="검색하려면 여기에 입력하십시오." aria-label="검색" />
    </SearchBox>
    <TaskGroup>
      <TaskButton $w={63} aria-label="작업 보기">
        <Svg w={20}><path d="M1 1v3h12V1M1 19v-3h12v3M1 7h12v6H1zM18 1v5M18 11v8M17 8.500h2.500" stroke="#fff" strokeWidth="1.300" /></Svg>
      </TaskButton>
      {mainTasks.map((t) => (
        <TaskButton key={t.name} $w={51} $open={t.open} $active={t.active} aria-label={t.name}>{t.art}</TaskButton>
      ))}
    </TaskGroup>
    <TaskGroup $gap={51}>
      {appTasks.map((t) => (
        <TaskButton key={t.name} $w={50} $open aria-label={t.name}>{t.art}</TaskButton>
      ))}
    </TaskGroup>
    <Tray>
      <IconButton $w={58} aria-label="뉴스">
        <Svg w={30} h={21} box="0 0 30 21"><path d="M1 1h24v19H1zM25 5h4v15h-4M5 5h16" stroke="#fff" strokeWidth="2" /><path d="M5 9h7v7H5zM14 9.500h7M14 12.500h7M14 15.500h7" stroke="#fff" strokeWidth="1.600" /></Svg>
      </IconButton>
      <IconButton $w={32} aria-label="숨겨진 아이콘"><ChevronUp size={22} strokeWidth={1.4} /></IconButton>
      <IconButton $w={30} aria-label="카메라">
        <Svg w={16} h={18} box="0 0 16 18"><path d="M2 4.500h8v9H2zM10 8l4-2v6l-4-2M4 2.500q3-2 6 0M4 15.500q3 2 6 0" stroke="#fff" strokeWidth="1.300" /></Svg>
      </IconButton>
      <IconButton $w={29} aria-label="배터리">
        <Svg w={21} h={14} box="0 0 21 14"><path d="M7 4h10v6H7z" fill="#fff" stroke="#fff" /><path d="M8 2h11v10H5V8M19 5h1.500v4H19M2 0v3M5 0v3M.5 3h6v2.500h-6z" stroke="#fff" strokeWidth="1.200" /></Svg>
      </IconButton>
      <IconButton $w={30} aria-label="네트워크">
        <Svg w={21} h={18} box="0 0 21 18"><path d="M8 1.500h12v11H4V8M12 12.500V17M8 17h8M1 1h5v4H1zM3.500 5v12" stroke="#fff" strokeWidth="1.300" /></Svg>
      </IconButton>
      <IconButton $w={29} aria-label="음소거">
        <Svg w={20} h={14} box="0 0 20 14"><path d="M1 4.500h3L8 1v12L4 9.500H1zM12.500 4l6 6M18.500 4l-6 6" stroke="#fff" strokeWidth="1.300" /></Svg>
      </IconButton>
      <IconButton $w={30} aria-label="상태">
        <Svg w={18} box="0 0 18 18"><circle cx="9" cy="9" r="9" fill="#a3a3a3" /><path d="M5.500 5.500l7 7M12.500 5.500l-7 7" stroke="#222" strokeWidth="2" /></Svg>
      </IconButton>
      <Clock>오후 3:07<br />2022-12-28</Clock>
      <IconButton $w={51} aria-label="알림">
        <Svg w={21} box="0 0 21 21"><path d="M1 1h19v16h-6.500L10.500 20l-3-3H1z" stroke="#fff" strokeWidth="1.400" /></Svg>
      </IconButton>
      <TrayEnd />
    </Tray>
  </Taskbar>
);

export default function App() {
  return (
    <Screen>
      <GlobalStyle />
      <BrowserBar />
      <Page>
        <ConsolePage />
        <ChangeDialog />
      </Page>
      <WindowsTaskbar />
    </Screen>
  );
}
